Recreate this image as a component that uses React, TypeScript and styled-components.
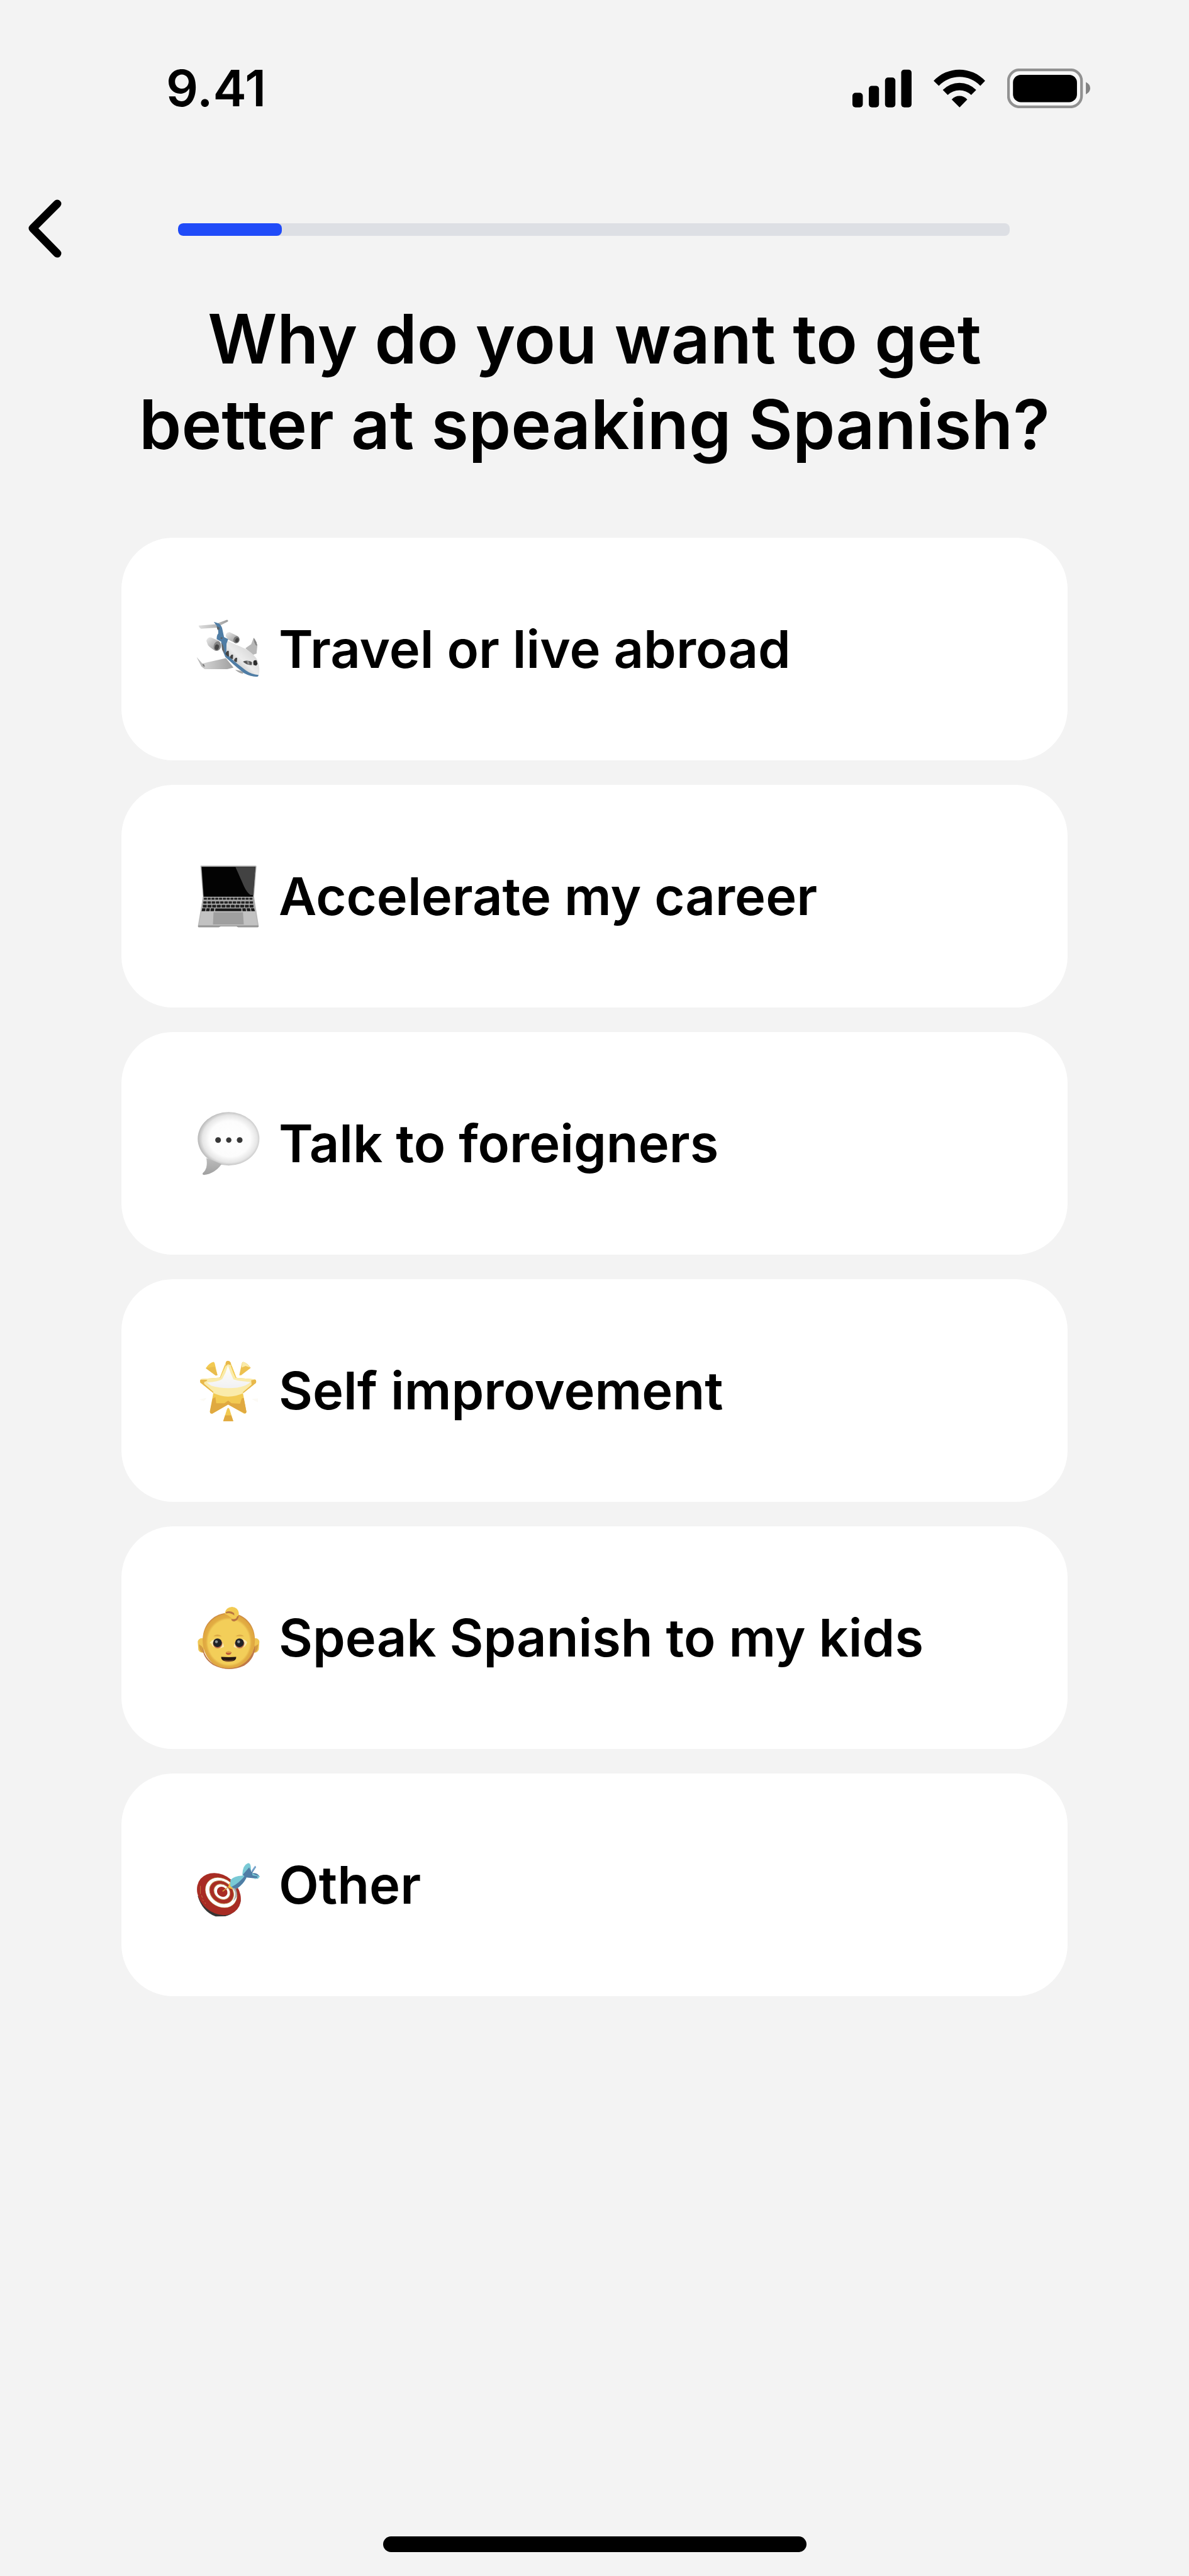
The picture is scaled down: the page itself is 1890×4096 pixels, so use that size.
import React from "react";
import styled, { createGlobalStyle } from "styled-components";

const GlobalStyle = createGlobalStyle`
  * { box-sizing: border-box; }
  body {
    margin: 0;
    background: #f3f3f3;
    color: #000;
    font-family: Inter, "Liberation Sans", sans-serif;
  }
`;

const Screen = styled.main`
  display: flex;
  flex-direction: column;
  min-height: 100vh;
  background: #f3f3f3;
`;

const StatusBar = styled.header`
  display: flex;
  align-items: center;
  justify-content: space-between;
  height: 280px;
  padding: 0 157px 0 264px;
`;

const Time = styled.time`
  font-size: 80px;
  line-height: 96px;
  font-weight: 600;
`;

const StatusIcons = styled.div`
  display: flex;
  align-items: center;
  gap: 35px;
  svg { display: block; height: 63px; }
`;

const TopBar = styled.nav`
  display: grid;
  grid-template-columns: 283px 1fr 285px;
  align-items: center;
  height: 170px;
`;

const BackButton = styled.button`
  justify-self: start;
  display: flex;
  padding: 18px 44px 22px;
  border: 0;
  background: none;
  color: inherit;
  cursor: pointer;
`;

const Track = styled.div`
  height: 20px;
  border-radius: 8px;
  background: #dddfe4;
  overflow: hidden;
`;

const Fill = styled.div`
  height: 100%;
  border-radius: 8px;
  background: #204bf8;
`;

const Title = styled.h1`
  margin: 21px 193px 112px;
  font-size: 108px;
  line-height: 136px;
  font-weight: 600;
  text-align: center;
`;

const Options = styled.ul`
  display: flex;
  flex-direction: column;
  gap: 39px;
  margin: 0;
  padding: 0 193px;
  list-style: none;
`;

const OptionButton = styled.button`
  display: flex;
  align-items: center;
  gap: 30px;
  width: 100%;
  height: 354px;
  padding: 0 120px;
  border: 0;
  border-radius: 82px;
  background: #fff;
  color: inherit;
  font-family: inherit;
  font-size: 83px;
  line-height: 104px;
  font-weight: 600;
  text-align: left;
  cursor: pointer;
`;

const Emoji = styled.svg`
  flex: none;
  width: 100px;
  height: 100px;
  overflow: visible;
`;

const HomeIndicator = styled.div`
  width: 673px;
  height: 25px;
  margin: auto auto 38px;
  border-radius: 13px;
  background: #000;
`;

function Signal() {
  return (
    <svg width="94" viewBox="112 90 285 191" aria-label="Signal">
      <rect x="112" y="207" width="50" height="70" rx="15" />
      <rect x="191" y="173" width="49" height="104" rx="15" />
      <rect x="269" y="133" width="50" height="144" rx="15" />
      <rect x="347" y="95" width="50" height="182" rx="15" />
    </svg>
  );
}

function Wifi() {
  return (
    <svg width="82" viewBox="504 90 248 191" aria-label="Wi-Fi">
      <path d="M504 149A170 170 0 0 1 752 149L729 173A139 139 0 0 0 529 173Z" />
      <path d="M548 193A112 112 0 0 1 709 193L685 217A82 82 0 0 0 572 217Z" />
      <path d="M591 239A50 50 0 0 1 666 239L629 277Z" />
    </svg>
  );
}

function Battery() {
  return (
    <svg width="132" viewBox="861 90 401 191" aria-label="Battery">
      <rect x="867" y="96" width="353" height="179" rx="53" fill="#f8f8f8" stroke="#919191" strokeWidth="13" />
      <rect x="889" y="120" width="309" height="132" rx="38" />
      <path d="M1241 155Q1262 166 1262 185Q1262 204 1241 214Z" fill="#828282" />
    </svg>
  );
}

function Airplane() {
  return (
    <Emoji viewBox="84 55 306 306" aria-hidden="true">
      <defs>
        <linearGradient id="planeBody" x1="0" y1="1" x2="1" y2="0">
          <stop offset="0.25" stopColor="#b9b9b9" />
          <stop offset="0.5" stopColor="#ececec" />
          <stop offset="0.8" stopColor="#d5d5d5" />
        </linearGradient>
        <linearGradient id="planeWing" x1="0" y1="0" x2="1" y2="0">
          <stop offset="0" stopColor="#dedede" />
          <stop offset="1" stopColor="#9f9f9f" />
        </linearGradient>
        <linearGradient id="planeEngine" x1="0" y1="0" x2="1" y2="1">
          <stop offset="0" stopColor="#ececec" />
          <stop offset="1" stopColor="#8b8b8b" />
        </linearGradient>
      </defs>
      <path d="M92 94L170 88L230 66Q237 67 235 74L196 94L180 104L104 109Q96 106 92 94Z" fill="url(#planeWing)" />
      <path d="M83 248L110 278L225 252L262 298L232 306L122 306L106 294Z" fill="url(#planeWing)" />
      <path d="M83 248L110 278L123 304L107 293Z" fill="#b9b9b9" />
      <path d="M111 279L119 283L123 295L114 290Z" fill="#777" />
      <path d="M320 204L348 184L360 154Q374 168 378 192L374 230L356 236Z" fill="#b8b8b8" />
      <path d="M360 154Q374 168 378 192L370 190Q360 174 360 154Z" fill="#858585" />
      <path d="M270 308L312 318L308 328Q286 324 270 308Z" fill="#a3a3a3" />
      <path d="M224 146Q224 124 244 126L280 144Q294 152 291 168Q286 181 271 179L236 162Z" fill="url(#planeEngine)" />
      <ellipse cx="276" cy="163" rx="14" ry="17" fill="#777" transform="rotate(20 276 163)" />
      <ellipse cx="279" cy="165" rx="8" ry="11" fill="#444" transform="rotate(20 279 165)" />
      <path d="M222 164L250 176L322 208Q368 236 380 266Q393 304 385 334Q380 344 362 342Q318 334 278 298L214 228L206 196Z" fill="url(#planeBody)" />
      <path d="M166 76L190 83Q204 92 208 112L216 150L236 160L228 182L227 220L246 250L276 276L322 312Q350 332 384 334L381 342Q350 345 314 326L262 283L222 246L206 208L202 172L180 160Q180 140 188 132Q188 104 178 92Z" fill="#4f7da5" />
      <path d="M180 97L195 104L192 116L183 112ZM200 150L210 152L206 160L199 158Z" fill="#59636b" />
      <path d="M130 168Q136 148 154 152L190 168Q202 180 200 200Q194 218 174 217Q150 204 138 190Z" fill="url(#planeEngine)" />
      <ellipse cx="183" cy="193" rx="17" ry="23" fill="#858585" transform="rotate(15 183 193)" />
      <ellipse cx="181" cy="199" rx="10" ry="14" fill="#454545" transform="rotate(15 181 199)" />
      <path d="M202 176L212 192L220 230L208 214Z" fill="#666" />
      <path d="M222 232Q232 212 239 218L240 244L232 243ZM244 248Q252 230 260 236L259 257L250 255ZM264 263Q272 246 280 252L278 272L270 270Z" fill="#424242" />
      <path d="M308 269Q320 260 344 268L352 272L351 286Q324 286 308 269Z" fill="#555" />
      <path d="M358 272Q360 259 374 263L379 281L372 289L359 285Z" fill="#2c2c2c" />
      <path d="M326 265L338 268L340 284L331 282Z" fill="#929292" />
    </Emoji>
  );
}

function Laptop() {
  const rows = [
    { y: 212, x: 117, w: 240, h: 9, n: 13 },
    { y: 229, x: 114, w: 246, h: 11, n: 12 },
    { y: 246, x: 112, w: 250, h: 13, n: 11 },
  ];
  return (
    <Emoji viewBox="84 51 306 306" aria-hidden="true">
      <path d="M101 58Q101 55 106 55H369Q374 55 374 60L362 206L384 344Q385 356 379 356H285L278 352H198L190 356H94Q88 356 89 348L113 206Z" fill="#b9b9b9" />
      <path d="M105 60H370L359 208H115Z" fill="#777" />
      <path d="M107 61H368L356 206H117Z" fill="#030303" />
      <path d="M271 61H368L357 198H344Q326 184 314 158Z" fill="#424242" />
      <path d="M113 209H361L367 278H107Z" fill="#a6a6a6" />
      {rows.map((row) =>
        Array.from({ length: row.n }, (_, i) => (
          <rect key={`${row.y}-${i}`} x={row.x + (i * row.w) / row.n + 1} y={row.y} width={row.w / row.n - 4} height={row.h} rx="2" fill="#202020" />
        ))
      )}
      <path d="M110 263H126L124 277H107ZM131 263H147L145 277H128ZM152 263H168L167 277H150ZM174 264H300V277H173ZM305 263H321L323 277H306ZM326 263H342L345 277H328ZM347 263H362L366 277H349Z" fill="#171717" />
      <path d="M107 278H367L379 346H93Z" fill="#c2c2c2" />
      <path d="M165 282H308L312 342H162Z" fill="#9f9f9f" />
      <path d="M90 346H384V354H282L277 350H200L192 354H90Z" fill="#969696" />
    </Emoji>
  );
}

function SpeechBubble() {
  return (
    <Emoji viewBox="84 48 306 306" aria-hidden="true">
      <defs>
        <radialGradient id="bubbleFill" cx="0.52" cy="0.5" r="0.54">
          <stop offset="0" stopColor="#fff" />
          <stop offset="0.62" stopColor="#fcfcfc" />
          <stop offset="0.82" stopColor="#e6e6e6" />
          <stop offset="1" stopColor="#aaa" />
        </radialGradient>
        <linearGradient id="bubbleTail" x1="0" y1="0" x2="0" y2="1">
          <stop offset="0" stopColor="#bcbcbc" />
          <stop offset="1" stopColor="#a0a0a0" />
        </linearGradient>
      </defs>
      <ellipse cx="238" cy="179" rx="150" ry="130" fill="url(#bubbleFill)" />
      <path d="M130 273Q166 286 204 302Q172 348 118 355Q108 353 113 345Q139 323 130 273Z" fill="url(#bubbleTail)" />
      <circle cx="187" cy="185" r="14" fill="#383838" />
      <circle cx="239" cy="185" r="13" fill="#383838" />
      <circle cx="292" cy="185" r="14" fill="#383838" />
    </Emoji>
  );
}

function GlowingStar() {
  return (
    <Emoji viewBox="84 45 306 306" aria-hidden="true">
      <defs>
        <clipPath id="starShape">
          <path d="M226 58Q236 48 247 60L276 136L366 144Q377 151 370 162L308 212L325 302Q323 313 312 310L236 266L158 311Q146 310 147 299L164 210L101 160Q96 146 106 142L196 135Z" />
        </clipPath>
        <linearGradient id="starShine" x1="0" y1="0" x2="0" y2="1">
          <stop offset="0" stopColor="#fffefa" />
          <stop offset="1" stopColor="#f1f1f3" />
        </linearGradient>
      </defs>
      <g clipPath="url(#starShape)">
        <path d="M84 45H390V351H84Z" fill="#f2ca52" />
        <path d="M84 128L200 120L226 58H247L270 124L390 128L370 168Q316 224 235 228Q158 222 98 166Z" fill="#faebaa" />
        <path d="M98 145L135 146L130 153L120 156L119 165L164 204L163 218L90 165ZM226 51H248L251 75L235 70L223 80ZM348 148L378 142L374 170L318 211L306 208L350 170Z" fill="#e8b84a" />
        <path d="M147 300L160 238L174 230L178 260H218L236 247L252 260L294 262L302 236L312 234L330 315L236 270L150 316Z" fill="#e0a940" />
        <path d="M194 136L210 100L222 75M251 76L263 108L276 136" fill="none" stroke="#f2ca52" strokeWidth="7" />
      </g>
      <path d="M235 76Q247 112 262 144Q278 151 344 157Q331 175 280 184Q208 192 153 174L132 159Q190 155 207 142Q225 112 235 76Z" fill="url(#starShine)" />
      <path d="M127 89Q146 62 165 59Q170 60 172 72L184 123L176 125Z" fill="#f2ca52" />
      <path d="M127 89L170 82L184 123L176 125Z" fill="#e9bd4d" />
      <path d="M346 88Q326 62 309 59Q303 60 302 69L290 124H299Z" fill="#edc14f" />
      <path d="M309 59Q326 62 343 86L321 79L302 86L303 65Z" fill="#faebaa" />
      <path d="M236 282Q242 284 246 300L261 347H212L227 300Q231 284 236 282Z" fill="#f2ca52" />
      <path d="M221 319H251L261 347H212Z" fill="#e0a940" />
      <path d="M97 242L129 233Q130 240 117 249ZM350 240L381 236V255Z" fill="#fcfaf5" />
    </Emoji>
  );
}

function Baby() {
  return (
    <Emoji viewBox="84 41 306 306" aria-hidden="true">
      <defs>
        <radialGradient id="babySkin" cx="0.5" cy="0.52" r="0.52">
          <stop offset="0.76" stopColor="#f3ce59" />
          <stop offset="0.84" stopColor="#e2ad43" />
          <stop offset="0.95" stopColor="#dfa640" />
          <stop offset="1" stopColor="#c98745" />
        </radialGradient>
      </defs>
      <path d="M114 196Q91 195 88 213L91 253Q96 269 120 267ZM363 196Q386 195 388 213L385 251Q378 270 355 267Z" fill="#efc653" />
      <path d="M94 226L109 237L118 266Q96 268 94 226ZM382 225L366 237L357 266Q380 268 382 225Z" fill="#d49c42" />
      <path d="M239 73C307 73 364 123 366 200C368 288 312 346 238 346C164 346 111 286 112 202C114 124 170 73 239 73Z" fill="url(#babySkin)" />
      <path d="M112 238Q125 310 196 337Q238 348 280 337Q350 309 366 229Q370 294 314 330Q238 365 162 326Q109 290 112 238Z" fill="#bf7847" />
      <path d="M219 78Q223 46 255 44Q285 47 288 75Q286 108 264 113Q250 110 258 103Q240 86 219 78Z" fill="#f2ca52" />
      <path d="M224 70Q246 59 265 75L266 86Q248 71 226 76ZM288 86Q286 110 265 115Q249 113 252 103Q277 107 279 91Z" fill="#b97542" />
      <path d="M164 187Q183 171 205 187ZM272 187Q293 172 314 187Z" fill="#dca845" />
      <path d="M146 219Q163 197 190 200Q211 208 216 238Q194 251 168 241Q157 235 154 222Z" fill="#faebb0" />
      <path d="M329 216Q313 197 286 200Q266 211 263 239Q286 251 310 241Q321 236 329 216Z" fill="#faebb0" />
      <circle cx="185" cy="223" r="23" fill="#c07042" />
      <circle cx="292" cy="223" r="23" fill="#c07042" />
      <circle cx="184" cy="219" r="21" fill="#202226" />
      <circle cx="291" cy="219" r="21" fill="#202226" />
      <circle cx="179" cy="214" r="7" fill="#8d9397" />
      <circle cx="287" cy="214" r="7" fill="#8d9397" />
      <path d="M224 268Q238 254 253 267L247 275Q237 280 228 275Z" fill="#b84f37" />
      <path d="M225 264Q238 255 252 264L248 269H230Z" fill="#dfa044" />
      <path d="M202 287Q239 290 275 287Q276 303 259 308Q239 312 219 308Q201 303 202 287Z" fill="#241712" />
      <path d="M212 301Q238 308 266 301Q254 315 224 311Z" fill="#aa693c" opacity="0.55" />
    </Emoji>
  );
}

function Target() {
  return (
    <Emoji viewBox="84 38 306 306" aria-hidden="true">
      <path d="M88 245Q110 320 175 345L222 344Q280 330 297 270L290 230Z" fill="#353535" />
      <ellipse cx="191" cy="236" rx="116" ry="92" fill="#a82c24" transform="rotate(40 191 236)" />
      <ellipse cx="202" cy="229" rx="84" ry="68" fill="#b98746" transform="rotate(38 202 229)" />
      <ellipse cx="202" cy="229" rx="82" ry="66" fill="#fff" transform="rotate(38 202 229)" />
      <ellipse cx="204" cy="227" rx="63" ry="51" fill="#a82c24" stroke="#b98746" strokeWidth="3" transform="rotate(38 204 227)" />
      <ellipse cx="206" cy="225" rx="42" ry="35" fill="#fff" stroke="#b98746" strokeWidth="3" transform="rotate(38 206 225)" />
      <ellipse cx="207" cy="225" rx="27" ry="23" fill="#a82c24" transform="rotate(38 207 225)" />
      <path d="M253 207Q283 224 260 270Q276 257 280 239L276 205Z" fill="#858585" opacity="0.65" />
      <path d="M209 223L240 199" stroke="#d9a544" strokeWidth="5" />
      <path d="M237 199L243 180L251 187L249 202L262 204L255 212L241 207Z" fill="#f1bf45" />
      <path d="M246 196L247 167Q269 147 301 147L324 139L324 158Q309 188 281 207Q261 211 246 196Z" fill="#79c9d5" />
      <path d="M324 139L324 158Q309 188 281 207Q263 212 252 201Q288 185 324 139Z" fill="#4f7da5" />
      <path d="M305 142Q306 96 331 86Q343 83 346 102Q348 119 346 135L324 146Z" fill="#79c9d5" />
      <path d="M307 142L338 106L350 128L365 104Q371 97 371 106L353 134Q377 131 388 149L381 161L323 155Z" fill="#4f7da5" />
      <path d="M352 134L367 142L390 149Q388 161 365 163L360 157L377 158L379 150L355 145Z" fill="#79c9d5" />
      <path d="M349 123L367 98L371 106L354 126Z" fill="#77a5ce" />
      <path d="M101 196V235M106 242L111 254M112 263L116 269M123 277L126 283" stroke="#c27843" strokeWidth="3" />
    </Emoji>
  );
}

const reasons = [
  { label: "Travel or live abroad", Icon: Airplane },
  { label: "Accelerate my career", Icon: Laptop },
  { label: "Talk to foreigners", Icon: SpeechBubble },
  { label: "Self improvement", Icon: GlowingStar },
  { label: "Speak Spanish to my kids", Icon: Baby },
  { label: "Other", Icon: Target },
];

const step = 1;
const stepCount = 8;

export default function App() {
  return (
    <Screen>
      <GlobalStyle />
      <StatusBar>
        <Time>9.41</Time>
        <StatusIcons>
          <Signal />
          <Wifi />
          <Battery />
        </StatusIcons>
      </StatusBar>
      <TopBar>
        <BackButton type="button" aria-label="Back">
          <svg width="54" height="93" viewBox="0 0 54 93" fill="none" stroke="currentColor" strokeWidth="13" strokeLinecap="round" strokeLinejoin="round">
            <path d="M47 7L8 46L47 86" />
          </svg>
        </BackButton>
        <Track role="progressbar" aria-label="Progress" aria-valuemin={0} aria-valuemax={stepCount} aria-valuenow={step}>
          <Fill style={{ width: `${(step / stepCount) * 100}%` }} />
        </Track>
      </TopBar>
      <Title>
        Why do you want to get
        <br />
        better at speaking Spanish?
      </Title>
      <Options>
        {reasons.map(({ label, Icon }) => (
          <li key={label}>
            <OptionButton type="button">
              <Icon />
              <span>{label}</span>
            </OptionButton>
          </li>
        ))}
      </Options>
      <HomeIndicator />
    </Screen>
  );
}
